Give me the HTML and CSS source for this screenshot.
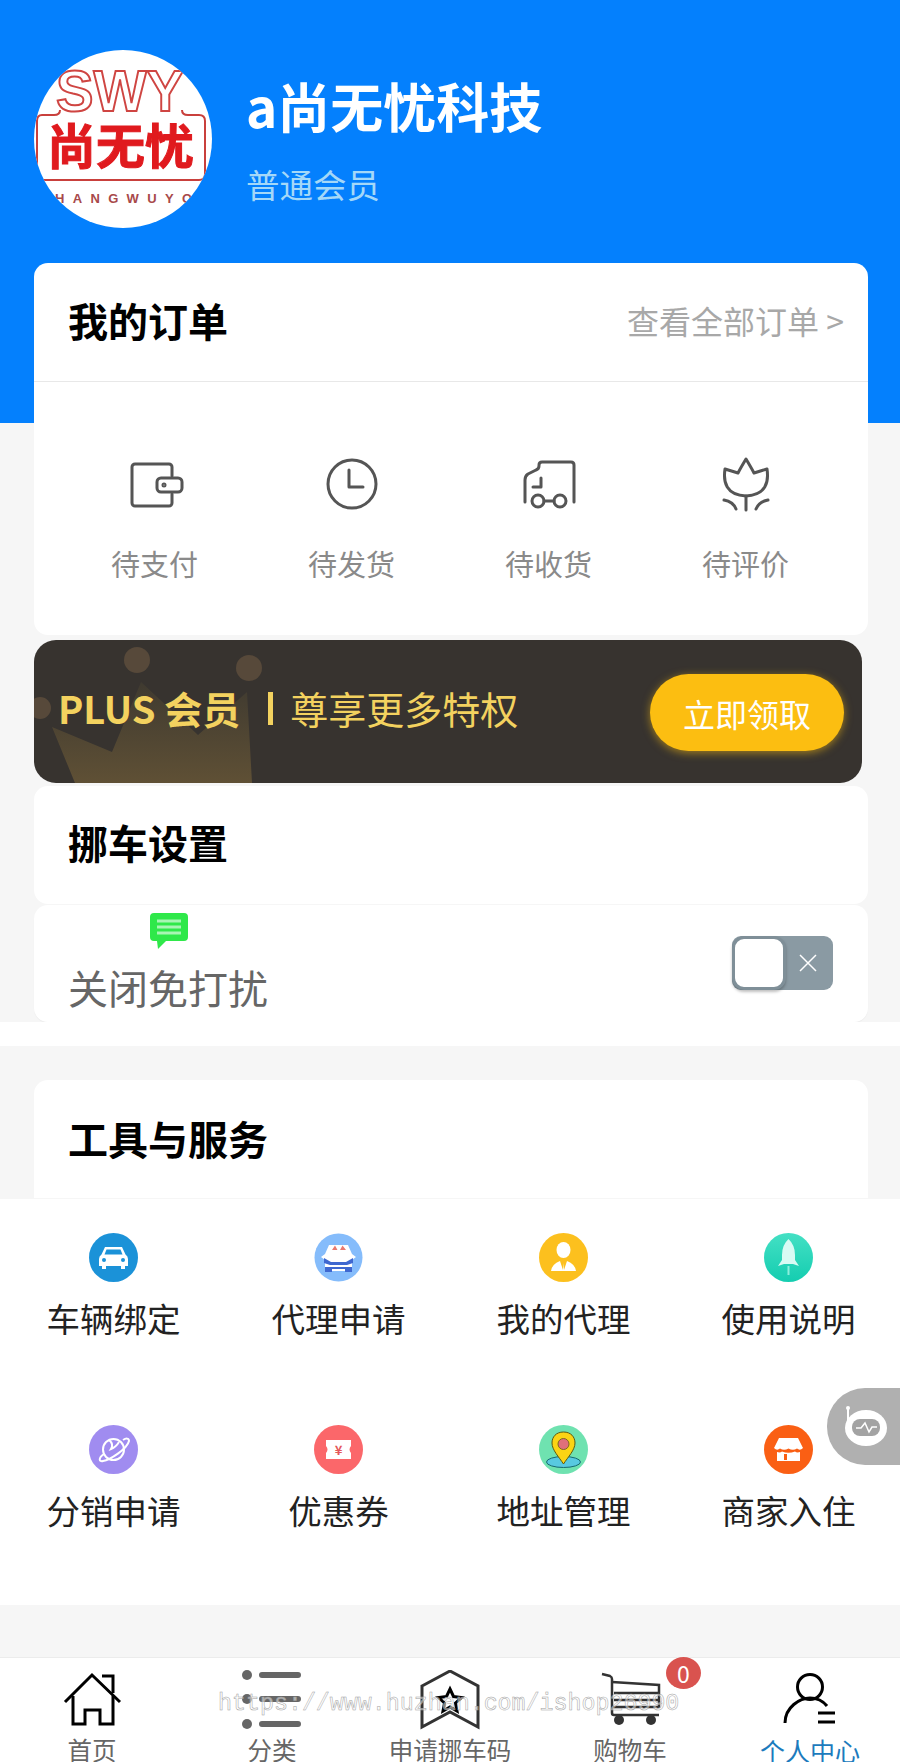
FILE: index.html
```html
<!DOCTYPE html>
<html lang="zh-CN">
<head>
    <meta charset="UTF-8">
    <meta name="viewport" content="width=device-width, initial-scale=1.0">
    <title>个人中心</title>
    <link rel="stylesheet" href="styles.css">
</head>
<body>
<div class="page">
    <!-- Header -->
    <div class="header">
        <div class="avatar">
            <svg width="178" height="178" viewBox="0 0 178 178">
                <text class="logo-swy" x="22" y="61" textLength="128" lengthAdjust="spacingAndGlyphs">SWY</text>
                <path class="logo-line" d="M26 60 Q26 65 20 65 H8 Q3 65 3 71 V124 Q3 130 9 130 H165 Q171 130 171 124 V71 Q171 65 165 65 H154 Q148 65 148 60"/>
                <text class="logo-cn" x="13" y="114" textLength="147" lengthAdjust="spacingAndGlyphs">尚无忧</text>
                <text class="logo-en" x="21" y="153" textLength="137">HANGWUYO</text>
            </svg>
        </div>
        <div class="user-info">
            <div class="user-name">a尚无忧科技</div>
            <div class="user-level">普通会员</div>
        </div>
    </div>

    <!-- Orders -->
    <div class="card orders">
        <div class="card-head orders-head">
            <div class="card-title">我的订单</div>
            <div class="more">查看全部订单 &gt;</div>
        </div>
        <div class="order-row">
            <div class="order-item">
                <svg class="line-icon" width="60" height="60" viewBox="0 0 60 60">
                    <path d="M47 22V13a3 3 0 0 0-3-3H10a3 3 0 0 0-3 3V49a3 3 0 0 0 3 3H44a3 3 0 0 0 3-3V40"/>
                    <rect x="32" y="24" width="25" height="14" rx="4"/>
                    <circle cx="39" cy="31" r="1"/>
                </svg>
                <div class="order-label">待支付</div>
            </div>
            <div class="order-item">
                <svg class="line-icon" width="60" height="60" viewBox="0 0 60 60">
                    <circle cx="30" cy="30" r="24"/>
                    <path d="M27 16V33H41"/>
                </svg>
                <div class="order-label">待发货</div>
            </div>
            <div class="order-item">
                <svg class="line-icon" width="60" height="60" viewBox="0 0 60 60">
                    <path d="M6 48V26q0-4 3-6l8-4q3-1 3-4v-1q0-3 3-3H52q3 0 3 3V48"/>
                    <path d="M22 24V33H14"/>
                    <circle cx="19" cy="47" r="6"/>
                    <circle cx="41" cy="47" r="6"/>
                    <path d="M25 47H35"/>
                </svg>
                <div class="order-label">待收货</div>
            </div>
            <div class="order-item">
                <svg class="line-icon" width="60" height="60" viewBox="0 0 60 60">
                    <path d="M30 5C33 10 36 15 38 19L51 15C53 28 50 41 30 42C10 41 7 28 9 15L22 19C24 15 27 10 30 5Z"/>
                    <path d="M30 42V56"/>
                    <path d="M8 46C14 47 18 50 20 55"/>
                    <path d="M52 46C46 47 42 50 40 55"/>
                </svg>
                <div class="order-label">待评价</div>
            </div>
        </div>
    </div>

    <!-- Plus banner -->
    <div class="banner">
        <svg class="crown" width="260" height="143" viewBox="0 0 260 143">
            <defs>
                <linearGradient id="crown-fade" x1="0" y1="0" x2="0" y2="1">
                    <stop offset="0" stop-color="#3f3a30"/>
                    <stop offset="1" stop-color="#5f5035"/>
                </linearGradient>
            </defs>
            <path fill="url(#crown-fade)" d="M41 143L18 87L78 112L107 42L164 95L213 52L218 143Z"/>
            <circle cx="103" cy="20" r="13"/>
            <circle cx="215" cy="28" r="13"/>
            <circle cx="6" cy="68" r="11"/>
        </svg>
        <div class="banner-text">
            <span class="plus">PLUS 会员</span>
            <span class="bar"></span>
            <span class="privilege">尊享更多特权</span>
        </div>
        <div class="banner-btn">立即领取</div>
    </div>

    <!-- Move car settings -->
    <div class="card move-card">
        <div class="card-title">挪车设置</div>
    </div>
    <div class="card dnd-card">
        <div class="dnd-left">
            <svg class="chat-icon" width="40" height="38" viewBox="0 0 40 38">
                <path class="chat-bg" d="M5 0H35q4 0 4 4V24q0 4-4 4H17L9 36L8 28H5q-4 0-4-4V4q0-4 4-4Z"/>
                <path class="chat-lines" d="M8 8H32M8 14H32M8 20H32"/>
            </svg>
            <div class="dnd-label">关闭免打扰</div>
        </div>
        <div class="toggle">
            <div class="knob"></div>
            <svg width="20" height="20" viewBox="0 0 20 20"><path class="toggle-x" d="M2 2L18 18M18 2L2 18"/></svg>
        </div>
    </div>
    <div class="white-band"></div>

    <!-- Tools -->
    <div class="card tools-card">
        <div class="card-title">工具与服务</div>
    </div>
    <div class="tools-panel">
        <div class="tool">
            <svg width="49" height="49" viewBox="0 0 49 49">
                <circle cx="24.5" cy="24.5" r="24.5" fill="#1b92d8"/>
                <path fill="#fff" d="M16 14H33L36.5 21.5Q39 23 39 26V33H36V36H32V33H17V36H13V33H10V26Q10 23 12.5 21.5Z"/>
                <path fill="#1b92d8" d="M17.5 16.5H31.5L33.5 21.5H15.500Z"/>
                <circle cx="15" cy="27" r="2" fill="#1b92d8"/>
                <circle cx="34" cy="27" r="2" fill="#1b92d8"/>
            </svg>
            <div class="tool-label">车辆绑定</div>
        </div>
        <div class="tool">
            <svg width="49" height="49" viewBox="0 0 49 49">
                <circle cx="24.5" cy="24.5" r="24" fill="#85bcfb"/>
                <path fill="#fff" d="M15 12H34L38 21L42 24L38 27V38H11V27L7 24L11 21Z"/>
                <path fill="#e9796f" d="M18 17L21 12.5L23.5 17ZM26 17L28.5 12.5L32 17Z"/>
                <path fill="#3f68d0" d="M10 25L17 29H32L39 25V30L33 32H16L10 30ZM11 34H18V39H11ZM31 34H38V39H31ZM16 34H33V36H16Z"/>
            </svg>
            <div class="tool-label">代理申请</div>
        </div>
        <div class="tool">
            <svg width="49" height="49" viewBox="0 0 49 49">
                <circle cx="24.5" cy="24.5" r="24.5" fill="#fcc01e"/>
                <ellipse cx="24.5" cy="17" rx="7" ry="8" fill="#fff"/>
                <path fill="#fff" d="M12 38Q13 31 21 28L24 37L24.5 30L25 37L28 28Q36 31 37 38Z"/>
            </svg>
            <div class="tool-label">我的代理</div>
        </div>
        <div class="tool">
            <svg width="49" height="49" viewBox="0 0 49 49">
                <defs>
                    <linearGradient id="rocket-bg" x1="0" y1="0" x2="0" y2="1">
                        <stop offset="0" stop-color="#44e0c4"/>
                        <stop offset="1" stop-color="#14cdb0"/>
                    </linearGradient>
                </defs>
                <circle cx="24.5" cy="24.5" r="24.5" fill="url(#rocket-bg)"/>
                <path fill="#d8fbf4" d="M24.5 6Q31 12 31 22V27L35 33L29 31H20L14 33L18 27V22Q18 12 24.5 6Z"/>
                <path fill="#8cefdc" d="M23.5 33H25.5V42H23.5Z"/>
            </svg>
            <div class="tool-label">使用说明</div>
        </div>
        <div class="tool">
            <svg width="49" height="49" viewBox="0 0 49 49">
                <circle cx="24.5" cy="24.5" r="24.5" fill="#a08cf0"/>
                <circle class="planet" cx="24.5" cy="24.5" r="10.5"/>
                <path class="planet" d="M15 29C9 33 10 37 14 36C21 35 38 24 40 16C40 13 37 13 34 15"/>
                <path class="planet" d="M20 15Q25 19 22 24Q27 22 30 17"/>
            </svg>
            <div class="tool-label">分销申请</div>
        </div>
        <div class="tool">
            <svg width="49" height="49" viewBox="0 0 49 49">
                <circle cx="24.5" cy="24.5" r="24.5" fill="#fb676a"/>
                <path fill="#fff" d="M12 15H37V21Q34 24.5 37 28V34H12V28Q15 24.5 12 21Z"/>
                <text class="yen" x="24.5" y="30" text-anchor="middle">¥</text>
            </svg>
            <div class="tool-label">优惠券</div>
        </div>
        <div class="tool">
            <svg width="49" height="49" viewBox="0 0 49 49">
                <circle cx="24.5" cy="24.5" r="24.5" fill="#6fe2b0"/>
                <ellipse cx="24.5" cy="37" rx="17" ry="5.5" fill="#58c9e0" stroke="#176a70"/>
                <path fill="#fbd414" stroke="#5d5a10" d="M24.5 7C32 7 36 12 36 18C36 25 29 32 24.5 39C20 32 13 25 13 18C13 12 17 7 24.5 7Z"/>
                <circle cx="24.5" cy="19" r="5.5" fill="#e0707a" stroke="#7c6a20"/>
            </svg>
            <div class="tool-label">地址管理</div>
        </div>
        <div class="tool">
            <svg width="49" height="49" viewBox="0 0 49 49">
                <circle cx="24.5" cy="24.5" r="24.5" fill="#fa5f14"/>
                <path fill="#fff" d="M15 13H34L39 23Q36 26 33 23.5Q29 26 24.5 23.5Q20 26 16 23.5Q13 26 10 23L15 13Z"/>
                <path fill="#fff" d="M13 27Q16 28 18 26.5Q24.5 29 31 26.5Q33 28 36 27V36H13Z"/>
                <path fill="#fa5f14" d="M20 29H23V35H20Z"/>
            </svg>
            <div class="tool-label">商家入住</div>
        </div>
    </div>
    <div class="bottom-gap"></div>

    <!-- Tab bar -->
    <div class="tabbar">
        <div class="tab tab-shift">
            <svg width="60" height="60" viewBox="0 0 60 60" class="tab-icon">
                <path d="M3 32L30 5L58 32"/>
                <path d="M40 6H51V23"/>
                <path d="M11 26V54H23V40H38V54H51V26"/>
            </svg>
            <div class="tab-label">首页</div>
        </div>
        <div class="tab tab-shift">
            <svg width="60" height="60" viewBox="0 0 60 60">
                <g fill="#666"><circle cx="5" cy="5" r="5"/><circle cx="5" cy="29" r="5"/><circle cx="5" cy="54" r="5"/></g>
                <path class="list-lines" d="M20 5H56M20 29H56M20 54H56"/>
            </svg>
            <div class="tab-label">分类</div>
        </div>
        <div class="tab">
            <svg width="60" height="60" viewBox="0 0 60 60" class="tab-icon tab-icon-dark">
                <path d="M2 16L30 1L58 16V57L30 42L2 57Z"/>
                <path class="tab-star" d="M30 19L33.5 26.5L41.5 27.5L35.5 33L37 41L30 37L23 41L24.5 33L18.5 27.5L26.5 26.5Z"/>
            </svg>
            <div class="tab-label">申请挪车码</div>
        </div>
        <div class="tab">
            <svg width="62" height="60" viewBox="0 0 62 60" class="tab-icon tab-icon-thin">
                <path d="M3 4L11 6Q13 7 13 9V43Q13 45 15 45H60"/>
                <path d="M13 12L60 15V37H14"/>
                <path d="M15 23H59M15 30H59"/>
                <circle class="wheel" cx="20" cy="50" r="5"/>
                <circle class="wheel" cx="52" cy="50" r="5"/>
            </svg>
            <div class="badge">0</div>
            <div class="tab-label">购物车</div>
        </div>
        <div class="tab tab-active">
            <svg width="60" height="60" viewBox="0 0 60 60" class="tab-icon">
                <circle cx="30" cy="17" r="12.5"/>
                <path d="M5 53C5 37 20 28 30 28C38 28 43 31 47 36"/>
                <path d="M38 43H55M38 52H55"/>
            </svg>
            <div class="tab-label">个人中心</div>
        </div>
    </div>

    <!-- Floating helper -->
    <div class="robot">
        <svg width="73" height="77" viewBox="0 0 73 77">
            <path class="robot-antenna" d="M21 21V33"/>
            <circle cx="21" cy="20" r="2" fill="#fff"/>
            <ellipse cx="39" cy="40" rx="21" ry="18" fill="#fff"/>
            <rect x="25" y="31" width="28" height="17" rx="8" fill="#a3a3a3"/>
            <path class="robot-pulse" d="M29 40H34L38 35L42 44L45 39H50"/>
        </svg>
    </div>

    <div class="watermark">https://www.huzhan.com/ishop26990</div>
</div>
</body>
</html>
```

FILE: styles.css
```css
/* General Reset */
* {
    margin: 0;
    padding: 0;
    box-sizing: border-box;
}

body {
    font-family: 'Noto Sans CJK SC', 'Noto Sans', sans-serif;
    background: #f6f6f6;
}

svg {
    display: block;
}

.page {
    position: relative;
    width: 900px;
    height: 1762px;
    overflow: hidden;
    background: #f6f6f6;
}

/* Header */
.header {
    display: flex;
    align-items: flex-start;
    gap: 34px;
    height: 423px;
    padding: 50px 34px 0;
    background: #0480fd;
}

.avatar {
    width: 178px;
    height: 178px;
    border-radius: 50%;
    overflow: hidden;
    background: #fff;
}

.logo-swy {
    font-family: 'Liberation Sans', sans-serif;
    font-size: 58px;
    font-weight: bold;
    fill: none;
    stroke: #cf4542;
    stroke-width: 2;
}

.logo-line {
    fill: none;
    stroke: #c9403c;
    stroke-width: 2;
}

.logo-cn {
    font-size: 48px;
    font-weight: bold;
    fill: #e01a1e;
    stroke: #e01a1e;
    stroke-width: 1;
}

.logo-en {
    font-family: 'Liberation Sans', sans-serif;
    font-size: 13px;
    font-weight: bold;
    fill: #a8494a;
}

.user-info {
    padding-top: 16px;
}

.user-name {
    font-size: 53px;
    font-weight: bold;
    line-height: 78px;
    color: #fff;
}

.user-level {
    margin-top: 15px;
    font-size: 33.5px;
    line-height: 50px;
    color: #a4d8f8;
}

/* Cards */
.card {
    margin: 0 32px 0 34px;
    background: #fff;
    border-radius: 14px;
}

.card-title {
    font-size: 40px;
    font-weight: bold;
    line-height: 60px;
    color: #000;
}

.orders {
    position: relative;
    height: 372px;
    margin-top: -160px;
}

.orders-head {
    display: flex;
    justify-content: space-between;
    align-items: center;
    height: 119px;
    padding: 0 24px 4px 34px;
    border-bottom: 1px solid #e8e8e8;
}

.more {
    font-size: 32px;
    color: #a8a8a8;
}

.order-row {
    display: grid;
    grid-template-columns: repeat(4, 197px);
    padding: 72px 0 0 22px;
}

.order-item {
    display: flex;
    flex-direction: column;
    align-items: center;
}

.line-icon {
    fill: none;
    stroke: #555;
    stroke-width: 3;
    stroke-linejoin: round;
    stroke-linecap: round;
}

.order-label {
    margin-top: 26px;
    font-size: 29px;
    line-height: 46px;
    color: #8a8a8a;
}

/* Plus banner */
.banner {
    position: relative;
    display: flex;
    justify-content: space-between;
    align-items: center;
    width: 828px;
    height: 143px;
    margin: 5px 0 0 34px;
    padding: 0 18px 7px 24px;
    overflow: hidden;
    background: #37332f;
    border-radius: 22px;
}

.crown {
    position: absolute;
    left: 0;
    top: 0;
    fill: #57493a;
}

.banner-text {
    position: relative;
    display: flex;
    align-items: center;
    color: #f3d25f;
}

.plus {
    font-size: 38px;
    font-weight: bold;
    line-height: 56px;
}

.bar {
    width: 5px;
    height: 33px;
    margin: 0 17px 0 28px;
    background: #f3d25f;
}

.privilege {
    font-size: 38px;
    line-height: 56px;
}

.banner-btn {
    position: relative;
    display: flex;
    justify-content: center;
    align-items: center;
    width: 194px;
    height: 77px;
    margin-top: 9px;
    font-size: 32px;
    color: #fff;
    background: #fcbe11;
    border-radius: 39px;
    box-shadow: 0 2px 9px rgba(252, 190, 17, 0.55);
}

/* Move car */
.move-card {
    height: 118px;
    margin-top: 3px;
    padding: 26px 34px 0;
}

.dnd-card {
    display: flex;
    justify-content: space-between;
    height: 117px;
    margin-top: 1px;
    padding: 8px 35px 0 34px;
    box-shadow: 0 1px 1px rgba(0, 0, 0, 0.04);
}

.dnd-left {
    display: flex;
    flex-direction: column;
}

.chat-icon {
    margin-left: 81px;
}

.chat-bg {
    fill: #2fe84a;
}

.chat-lines {
    fill: none;
    stroke: #a8f5b4;
    stroke-width: 3;
}

.dnd-label {
    margin-top: 6px;
    font-size: 40px;
    line-height: 60px;
    color: #666;
}

.toggle {
    display: flex;
    align-items: center;
    justify-content: space-between;
    width: 101px;
    height: 54px;
    margin-top: 23px;
    padding-right: 15px;
    background: #8a9aa3;
    border-radius: 9px;
}

.knob {
    width: 54px;
    height: 54px;
    background: #fff;
    border: 3px solid #7f8f98;
    border-radius: 12px;
    box-shadow: 0 2px 3px rgba(0, 0, 0, 0.25);
}

.toggle-x {
    stroke: #fff;
    stroke-width: 1.5;
}

.white-band {
    height: 24px;
    background: #fff;
}

/* Tools */
.tools-card {
    height: 118px;
    margin-top: 34px;
    padding: 28px 34px 0;
    border-radius: 14px 14px 0 0;
}

.tools-panel {
    display: grid;
    grid-template-columns: repeat(4, 225px);
    grid-auto-rows: 192px;
    height: 406px;
    margin-top: 1px;
    padding: 34px 0 0 1px;
    background: #fff;
}

.tool {
    display: flex;
    flex-direction: column;
    align-items: center;
}

.tool-label {
    margin-top: 11px;
    font-size: 33.5px;
    line-height: 50px;
    color: #222;
}

.planet {
    fill: none;
    stroke: #fff;
    stroke-width: 2;
}

.yen {
    font-size: 13px;
    font-weight: bold;
    fill: #e5575a;
}

.bottom-gap {
    height: 52px;
}

/* Tab bar */
.tabbar {
    display: grid;
    grid-template-columns: repeat(5, 180px);
    height: 105px;
    padding-top: 12px;
    background: #fff;
    border-top: 1px solid #ececec;
}

.tab {
    position: relative;
    display: flex;
    flex-direction: column;
    align-items: center;
}

.tab-shift {
    padding-left: 4px;
}

.tab-icon {
    fill: none;
    stroke: #000;
    stroke-width: 3;
}

.tab-icon-dark {
    stroke: #333;
}

.tab-star {
    stroke: #000;
}

.tab-icon-thin {
    stroke: #333;
    stroke-width: 2.5;
}

.wheel {
    fill: #333;
    stroke: none;
}

.list-lines {
    fill: none;
    stroke: #666;
    stroke-width: 6;
    stroke-linecap: round;
}

.tab-label {
    margin-top: 8px;
    font-size: 24.5px;
    line-height: 24px;
    white-space: nowrap;
    color: #666;
}

.tab-active .tab-label {
    font-size: 25px;
    color: #1c7bbd;
}

.badge {
    position: absolute;
    top: -13px;
    left: 126px;
    width: 35px;
    height: 32px;
    font-size: 23px;
    line-height: 32px;
    text-align: center;
    color: #fff;
    background: #d9534f;
    border-radius: 50%;
}

/* Floating helper */
.robot {
    position: absolute;
    right: 0;
    top: 1388px;
    width: 73px;
    height: 77px;
    background: #b0b0b0;
    border-radius: 38px 0 0 38px;
}

.robot-antenna {
    stroke: #fff;
    stroke-width: 2;
}

.robot-pulse {
    fill: none;
    stroke: #fff;
    stroke-width: 1.5;
}

/* Watermark over the tab bar */
.watermark {
    position: absolute;
    left: 218px;
    top: 1689px;
    font-family: 'Liberation Mono', monospace;
    font-size: 23.3px;
    line-height: 30px;
    white-space: nowrap;
    color: rgba(255, 255, 255, 0.5);
    -webkit-text-stroke: 0.5px #a0a0a0;
}
```
